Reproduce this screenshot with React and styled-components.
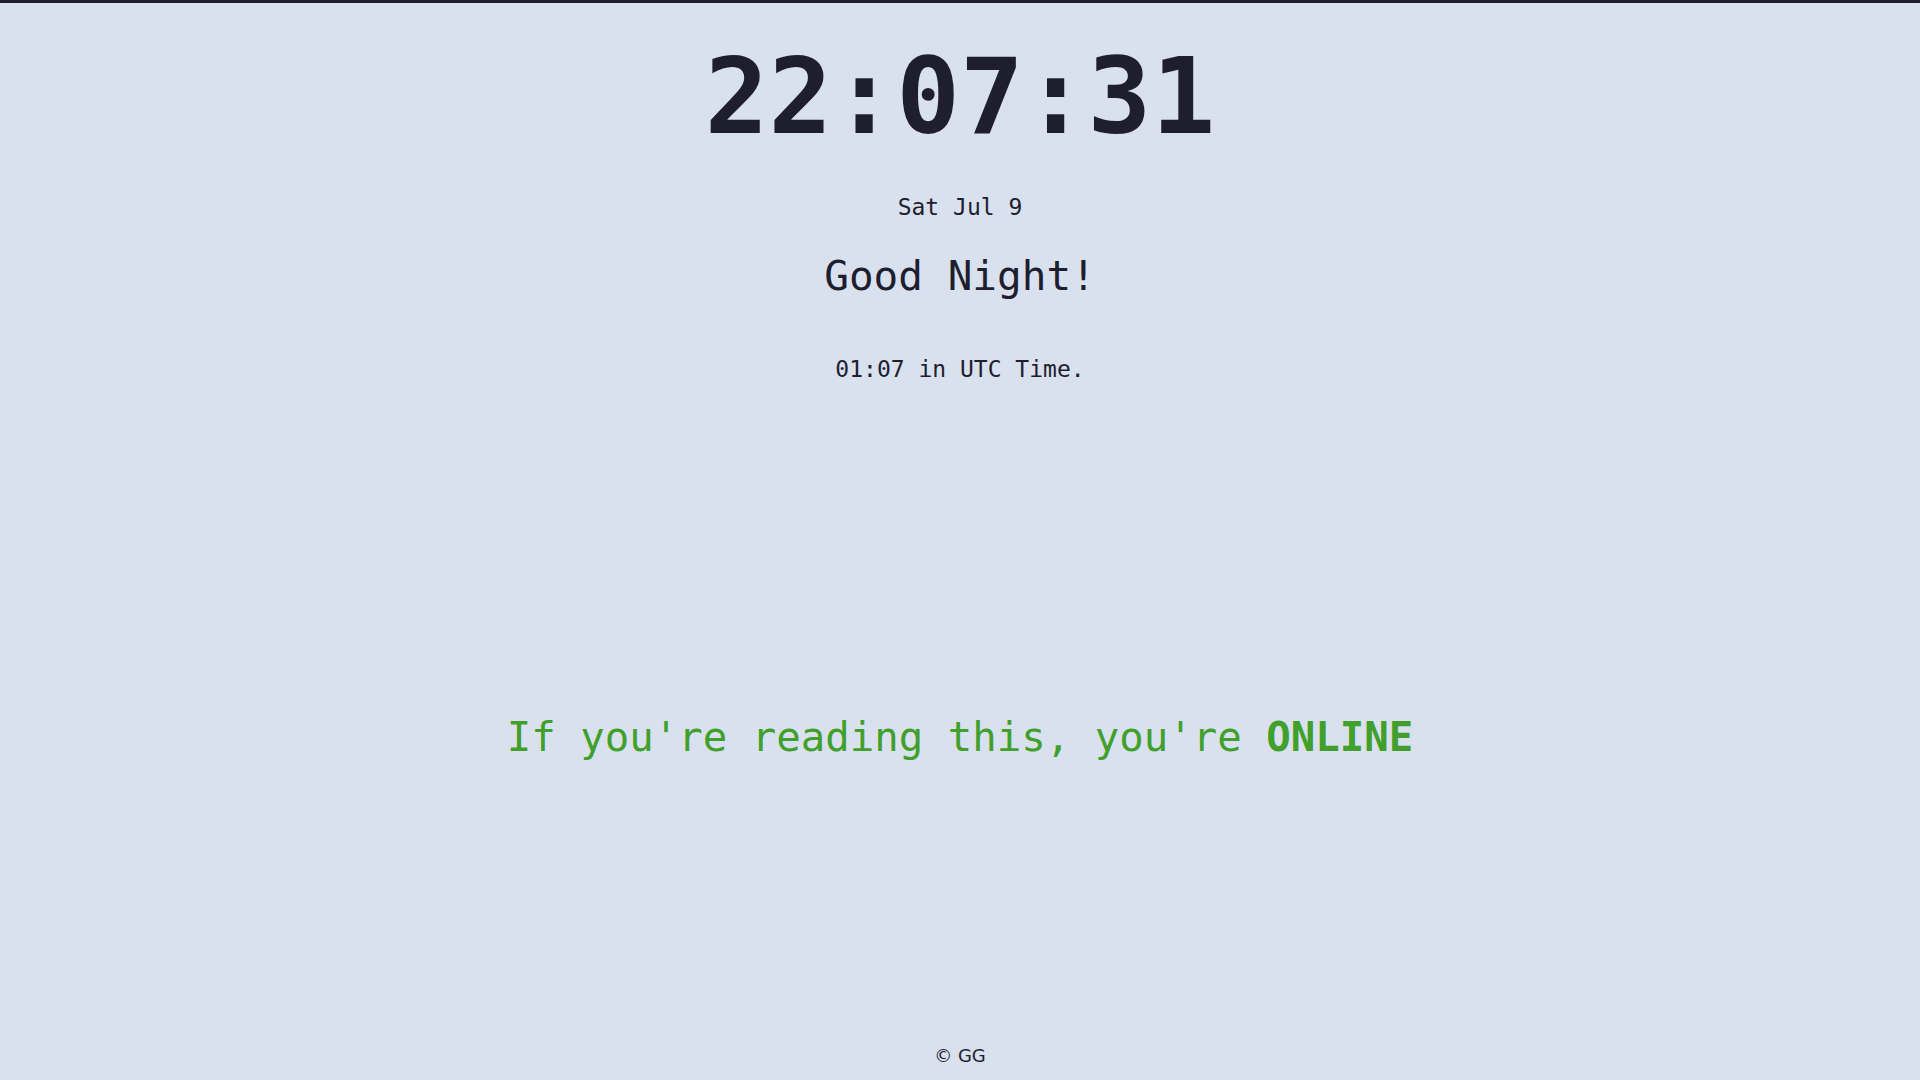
import React, { useEffect, useState } from 'react';
import styled, { createGlobalStyle } from 'styled-components';

const colors = {
  base: '#d9e0ee',
  text: '#1e1e2e',
  green: '#40a02b',
};

const GlobalStyle = createGlobalStyle`
  html, body {
    margin: 0;
    padding: 0;
    background: ${colors.base};
  }
  body {
    font-family: "DejaVu Sans Mono", "Liberation Mono", monospace;
    color: ${colors.text};
  }
`;

const StyledPage = styled.div`
  box-sizing: border-box;
  min-height: 100vh;
  border-top: 3px solid ${colors.text};
  display: flex;
  flex-direction: column;
  align-items: center;
  text-align: center;
`;

const StyledHeader = styled.header`
  display: flex;
  flex-direction: column;
  align-items: center;
  padding-top: 41px;
`;

const StyledClock = styled.div`
  font-size: 106px;
  font-weight: bold;
  line-height: 1;
`;

const StyledLine = styled.div`
  font-size: ${props => props.size}px;
  line-height: 1;
  margin-top: ${props => props.gap}px;
`;

const StyledMain = styled.main`
  flex: 1;
  display: flex;
  align-items: center;
  justify-content: center;
  padding-top: 46px;
`;

const StyledStatus = styled.p`
  margin: 0;
  color: ${colors.green};
  font-size: 40.7px;
  line-height: 1;
  white-space: pre;
`;

const StyledFooter = styled.footer`
  font-family: "DejaVu Sans", "Open Sans", sans-serif;
  font-size: 18px;
  line-height: 1;
  padding-bottom: 15px;
`;

const App = () => {
  const [time] = useState('22:07:31');

  useEffect(() => {
    document.title = 'Clock';
  }, []);

  return (
    <>
      <GlobalStyle />
      <StyledPage>
        <StyledHeader>
          <StyledClock>{time}</StyledClock>
          <StyledLine size={23} gap={46}>Sat Jul 9</StyledLine>
          <StyledLine size={41} gap={37}>Good Night!</StyledLine>
          <StyledLine size={23} gap={61}>01:07 in UTC Time.</StyledLine>
        </StyledHeader>
        <StyledMain>
          <StyledStatus>
            {"If you're reading this, you're "}<b>ONLINE</b>
          </StyledStatus>
        </StyledMain>
        <StyledFooter>© GG</StyledFooter>
      </StyledPage>
    </>
  );
};

export default App;
